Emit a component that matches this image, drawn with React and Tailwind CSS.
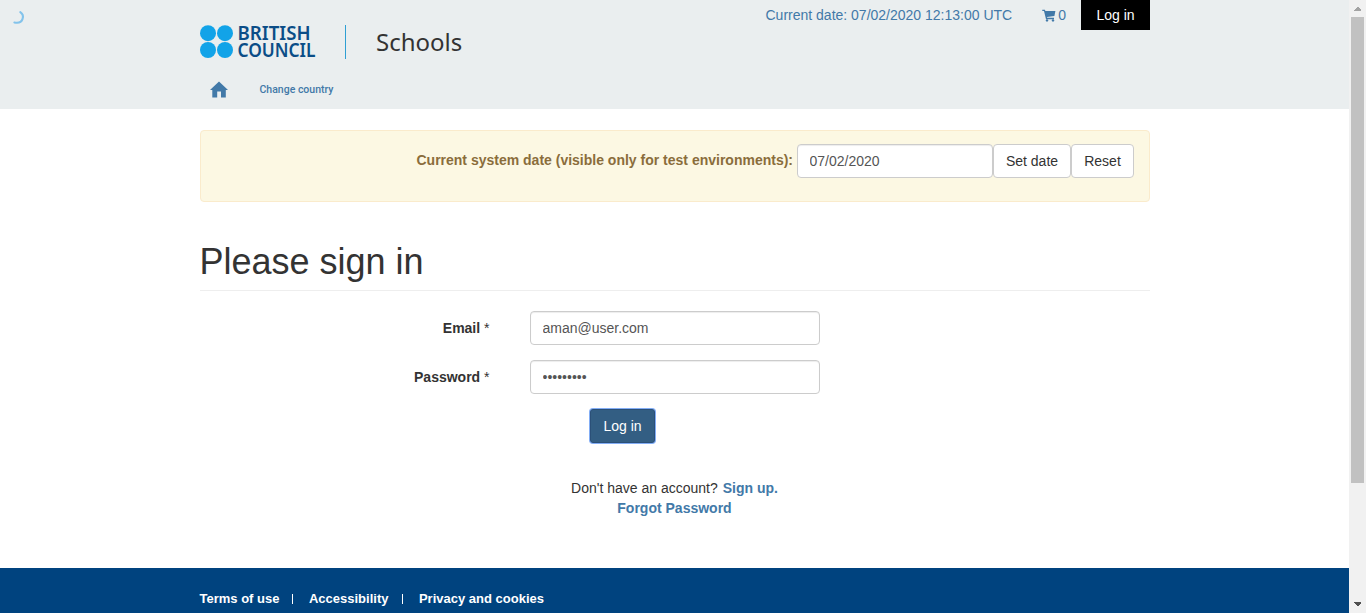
import React from "react";

function Logo() {
  return (
    <svg width="116" height="34" viewBox="0 0 116 34" className="block shrink-0 overflow-visible" role="img" aria-label="British Council">
      <g fill="#12a3e8">
        <circle cx="8" cy="8.2" r="8" />
        <circle cx="25" cy="8.2" r="8" />
        <circle cx="8" cy="25" r="8" />
        <circle cx="25" cy="25" r="8" />
      </g>
      <g fill="#0b4d87" className="font-['Noto_Sans',sans-serif] text-[20px] font-semibold">
        <text x="37.5" y="15.4" textLength="73" lengthAdjust="spacingAndGlyphs">BRITISH</text>
        <text x="37.5" y="32" textLength="78" lengthAdjust="spacingAndGlyphs">COUNCIL</text>
      </g>
    </svg>
  );
}

function HomeIcon() {
  return (
    <svg width="18" height="17" viewBox="0 0 18 17" className="block" fill="#4279a8">
      <path d="M9 0.4 L18 9 H15.8 V16.4 H11 V10.4 H7.2 V16.4 H2.3 V9 H0 Z" />
    </svg>
  );
}

function CartIcon() {
  return (
    <svg width="14" height="13" viewBox="0 0 14 13" className="block" fill="#4279a8">
      <path d="M0.3 0.7 H2.9 L3.4 2 H13.4 L12.4 7 L5 8 L5.2 8.8 H12 V10.2 H4 L2 2.1 H0.3 Z" />
      <circle cx="5" cy="11.4" r="1.2" />
      <circle cx="11" cy="11.4" r="1.2" />
    </svg>
  );
}

function Header() {
  return (
    <header className="relative h-[109px] bg-[#eaeeef]">
      <svg width="14" height="16" viewBox="0 0 14 16" className="absolute left-[12px] top-[10px]" fill="none">
        <path d="M8.3 2.2 C12.8 5.2 11.6 14.4 2.4 12.5" stroke="#83c3eb" strokeWidth="2.1" strokeLinecap="round" />
      </svg>
      <div className="ml-[200px] flex w-[950px] justify-between">
        <div>
          <div className="flex pt-[25px]">
            <Logo />
            <div className="ml-[29px] h-[34px] w-px bg-[#2f9fd3]" />
            <div className="ml-[30px] font-['Noto_Sans',sans-serif] text-[24px] leading-[34px] text-[#333]">Schools</div>
          </div>
          <nav className="mt-[21px] flex items-center pl-[9.5px]">
            <HomeIcon />
            <a className="ml-[32px] pt-px font-['Roboto',sans-serif] text-[10.5px] font-medium leading-[18px] text-[#4279a8]">Change country</a>
          </nav>
        </div>
        <div className="flex h-[30px] items-center text-[#4279a8]">
          <span>Current date: 07/02/2020 12:13:00 UTC</span>
          <span className="ml-[30px]"><CartIcon /></span>
          <span className="ml-[2px]">0</span>
          <a className="ml-[15px] flex h-[30px] w-[69px] items-center justify-center bg-black text-white">Log in</a>
        </div>
      </div>
    </header>
  );
}

const field = "h-[34px] rounded border border-[#ccc] bg-white px-[11.5px] text-[14px] text-[#555] shadow-[inset_0_1px_1px_rgba(0,0,0,0.075)] outline-none";
const button = "h-[34px] shrink-0 whitespace-nowrap rounded border border-[#ccc] bg-white text-center text-[14px] text-[#333]";

function DateNotice() {
  return (
    <section className="mt-[21px] flex h-[72px] justify-end rounded border border-[#faebcc] bg-[#fcf8e3] pr-[15px] pt-[13px]">
      <label className="mr-[4px] mt-[6px] h-5 font-bold leading-5 text-[#8a6d3b]">
        Current system date (visible only for test environments):
      </label>
      <input className={`${field} w-[196px]`} defaultValue="07/02/2020" />
      <button className={`${button} w-[78px]`}>Set date</button>
      <button className={`${button} w-[63px]`}>Reset</button>
    </section>
  );
}

function FormRow({ label, type, value }) {
  return (
    <div className="mb-[15px] flex items-center">
      <label className="mr-[40.5px] w-[289.5px] text-right">
        <b>{label}</b> *
      </label>
      <input type={type} defaultValue={value} className={`${field} w-[290px]`} />
    </div>
  );
}

function Footer() {
  return (
    <footer className="h-[45px] bg-[#00437f] pl-[199.5px] pt-[21px] text-[13px] font-bold text-white">
      <div className="flex items-center leading-5">
        <a>Terms of use</a>
        <i className="ml-[12.5px] mr-[16px] h-[10px] w-px bg-white" />
        <a>Accessibility</a>
        <i className="ml-[13.5px] mr-[16px] h-[10px] w-px bg-white" />
        <a>Privacy and cookies</a>
      </div>
    </footer>
  );
}

function Scrollbar() {
  return (
    <div className="flex h-[613px] w-[17px] flex-col items-center bg-[#f1f1f1]">
      <svg width="17" height="17" viewBox="0 0 17 17" className="block shrink-0" fill="#a3a3a3" shapeRendering="crispEdges">
        <path d="M5 11 V10 L8.5 6.5 L12 10 V11 Z" />
      </svg>
      <div className="h-[466px] w-[13px] bg-[#c1c1c1]" />
      <svg width="17" height="17" viewBox="0 0 17 17" className="mt-auto block shrink-0" fill="#505050" shapeRendering="crispEdges">
        <path d="M5 6 V7 L8.5 10.5 L12 7 V6 Z" />
      </svg>
    </div>
  );
}

export default function App() {
  return (
    <div className="flex h-[613px] w-[1366px] overflow-hidden bg-white font-['Liberation_Sans',Arial,sans-serif] text-[14px] leading-5 text-[#333]">
      <div className="flex w-[1349px] flex-col">
        <Header />
        <main className="ml-[200px] w-[950px] flex-1">
          <DateNotice />
          <h1 className="mt-[40px] h-[49px] border-b border-[#eee] text-[36px] leading-[40px] -indent-[0.5px]">Please sign in</h1>
          <form className="mt-[20px]">
            <FormRow label="Email" type="text" value="aman@user.com" />
            <FormRow label="Password" type="password" value="•••••••••" />
            <button
              type="button"
              className="ml-[390px] block h-[34px] w-[65px] rounded-[3px] border border-[#2b5078] bg-[#335e83] text-[14px] text-white shadow-[0_0_0_1px_#82adf5]"
            >
              Log in
            </button>
          </form>
          <div className="mt-[35px] pr-px text-center">
            <p>
              Don't have an account? <a className="ml-[1px] font-bold text-[#4279a8]">Sign up.</a>
            </p>
            <a className="font-bold text-[#4279a8]">Forgot Password</a>
          </div>
        </main>
        <Footer />
      </div>
      <Scrollbar />
    </div>
  );
}
